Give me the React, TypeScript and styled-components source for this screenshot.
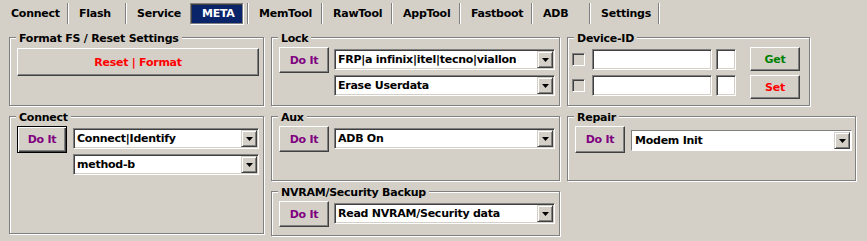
import React from "react";
import styled, { createGlobalStyle, css } from "styled-components";

const GlobalStyle = createGlobalStyle`
  html, body { margin: 0; padding: 0; background: #d4d0c8; }
  body {
    font-family: "DejaVu Sans", Verdana, sans-serif;
    font-weight: bold;
    font-size: 11px;
    letter-spacing: -0.25px;
    color: #000;
    overflow: hidden;
  }
`;

const Window = styled.div`
  width: 867px;
  height: 241px;
  background: #d4d0c8;
  overflow: hidden;
`;

const TabBar = styled.div`
  display: flex;
  height: 21px;
  padding: 3px 0 0 1px;
`;

const Tab = styled.div<{ $w: number; $noSep?: boolean }>`
  box-sizing: border-box;
  flex: none;
  width: ${(p) => p.$w}px;
  height: 21px;
  margin-right: 1px;
  padding-left: 10px;
  line-height: 21px;
  white-space: nowrap;
  border-right: 1px solid ${(p) => (p.$noSep ? "transparent" : "#808080")};
  box-shadow: ${(p) => (p.$noSep ? "none" : "1px 0 0 #fff")};
`;

const ActiveTab = styled(Tab)`
  padding-left: 0;
`;

const ActiveBox = styled.div`
  box-sizing: border-box;
  width: 53px;
  height: 21px;
  padding-left: 11px;
  line-height: 19px;
  color: #fff;
  background: #0a246a;
  border: 1px solid #808080;
  box-shadow: inset 1px 1px 0 #404040, 1px 1px 0 #fff;
`;

const Content = styled.div`
  display: flex;
  align-items: flex-start;
  gap: 6px;
  padding: 13px 0 0 9px;
`;

const Column = styled.div`
  display: flex;
  flex-direction: column;
  gap: 9px;
`;

const Group = styled.div<{ $w: number; $h: number; $pl?: number }>`
  position: relative;
  box-sizing: border-box;
  width: ${(p) => p.$w}px;
  height: ${(p) => p.$h}px;
  margin: 0 1px 1px 0;
  padding: 9px 0 0 ${(p) => p.$pl ?? 7}px;
  border: 1px solid #808080;
  box-shadow: inset 1px 1px 0 #fff, 1px 1px 0 #fff;
`;

const Legend = styled.span`
  position: absolute;
  top: -5px;
  left: 6px;
  padding: 0 3px;
  line-height: 12px;
  background: #d4d0c8;
  white-space: nowrap;
`;

const Row = styled.div<{ $gap: number }>`
  display: flex;
  align-items: flex-start;
  gap: ${(p) => p.$gap}px;
`;

const Stack = styled.div<{ $top: number; $gap: number }>`
  display: flex;
  flex-direction: column;
  gap: ${(p) => p.$gap}px;
  margin-top: ${(p) => p.$top}px;
`;

const Button = styled.button<{ $w: number; $h: number; $color: string; $default?: boolean }>`
  box-sizing: border-box;
  flex: none;
  width: ${(p) => p.$w}px;
  height: ${(p) => p.$h}px;
  margin: 0;
  padding: 0;
  font: inherit;
  letter-spacing: inherit;
  color: ${(p) => p.$color};
  background: #d4d0c8;
  cursor: default;
  ${(p) =>
    p.$default
      ? css`
          border: 1px solid #000;
          box-shadow: inset 1px 1px 0 #fff, inset -1px -1px 0 #404040, inset -2px -2px 0 #808080;
        `
      : css`
          border: 1px solid;
          border-color: #fff #404040 #404040 #fff;
          box-shadow: inset -1px -1px 0 #808080;
        `}
`;

const sunken = css`
  border: 1px solid;
  border-color: #808080 #fff #fff #808080;
  box-shadow: inset 1px 1px 0 #404040, inset -1px -1px 0 #d4d0c8;
`;

const Combo = styled.div<{ $w: number; $flat?: boolean }>`
  box-sizing: border-box;
  flex: none;
  width: ${(p) => p.$w}px;
  height: 21px;
  padding: 1px;
  display: flex;
  align-items: center;
  justify-content: space-between;
  background: #fff;
  ${(p) =>
    p.$flat
      ? css`
          border: 1px solid;
          border-color: #808080 #fff #fff #808080;
          box-shadow: inset -1px -1px 0 #fff;
        `
      : sunken}
`;

const ComboText = styled.span`
  padding-left: 2px;
  white-space: nowrap;
  overflow: hidden;
  line-height: 17px;
`;

const DropButton = styled.span`
  box-sizing: border-box;
  flex: none;
  width: 16px;
  height: 17px;
  display: flex;
  align-items: center;
  justify-content: center;
  background: #d4d0c8;
  border: 1px solid;
  border-color: #d4d0c8 #404040 #404040 #d4d0c8;
  box-shadow: inset 1px 1px 0 #fff, inset -1px -1px 0 #808080;
`;

const Edit = styled.div<{ $w: number }>`
  box-sizing: border-box;
  flex: none;
  width: ${(p) => p.$w}px;
  height: 21px;
  background: #fff;
  ${sunken}
`;

const Check = styled.div`
  box-sizing: border-box;
  flex: none;
  width: 13px;
  height: 13px;
  background: #d4d0c8;
  ${sunken}
`;

const FieldRow = styled.div`
  display: flex;
  align-items: center;
  height: 21px;
`;

const Spacer = styled.div<{ $w: number }>`
  flex: none;
  width: ${(p) => p.$w}px;
`;

const Arrow = () => (
  <svg width="7" height="4" viewBox="0 0 7 4">
    <polygon points="0,0 7,0 3.5,4" fill="#000" />
  </svg>
);

const Select = ({ w, text, flat }: { w: number; text: string; flat?: boolean }) => (
  <Combo $w={w} $flat={flat}>
    <ComboText>{text}</ComboText>
    <DropButton>
      <Arrow />
    </DropButton>
  </Combo>
);

const PURPLE = "#800080";

const tabs: { label: string; w: number; noSep?: boolean; active?: boolean }[] = [
  { label: "Connect", w: 67 },
  { label: "Flash", w: 57 },
  { label: "Service", w: 62, noSep: true },
  { label: "META", w: 58, active: true },
  { label: "MemTool", w: 73 },
  { label: "RawTool", w: 69 },
  { label: "AppTool", w: 67 },
  { label: "Fastboot", w: 71 },
  { label: "ADB", w: 57 },
  { label: "Settings", w: 68 },
];

export default function App() {
  return (
    <Window>
      <GlobalStyle />
      <TabBar>
        {tabs.map((t) =>
          t.active ? (
            <ActiveTab key={t.label} $w={t.w}>
              <ActiveBox>{t.label}</ActiveBox>
            </ActiveTab>
          ) : (
            <Tab key={t.label} $w={t.w} $noSep={t.noSep}>
              {t.label}
            </Tab>
          )
        )}
      </TabBar>
      <Content>
        <Column>
          <Group $w={255} $h={69}>
            <Legend>Format FS / Reset Settings</Legend>
            <Stack $top={1} $gap={0}>
              <Button $w={242} $h={28} $color="#ff0000">
                Reset | Format
              </Button>
            </Stack>
          </Group>
          <Group $w={255} $h={118}>
            <Legend>Connect</Legend>
            <Row $gap={6}>
              <Button $w={50} $h={27} $color={PURPLE} $default>
                Do It
              </Button>
              <Stack $top={2} $gap={5}>
                <Select w={186} text="Connect|Identify" />
                <Select w={186} text="method-b" />
              </Stack>
            </Row>
          </Group>
        </Column>
        <Column>
          <Group $w={289} $h={69}>
            <Legend>Lock</Legend>
            <Row $gap={5}>
              <Button $w={50} $h={26} $color={PURPLE}>
                Do It
              </Button>
              <Stack $top={2} $gap={5}>
                <Select w={221} text="FRP|a infinix|itel|tecno|viallon" />
                <Select w={221} text="Erase Userdata" />
              </Stack>
            </Row>
          </Group>
          <Group $w={289} $h={65}>
            <Legend>Aux</Legend>
            <Row $gap={5}>
              <Button $w={50} $h={26} $color={PURPLE}>
                Do It
              </Button>
              <Stack $top={2} $gap={5}>
                <Select w={221} text="ADB On" />
              </Stack>
            </Row>
          </Group>
          <Group $w={289} $h={45}>
            <Legend>NVRAM/Security Backup</Legend>
            <Row $gap={5}>
              <Button $w={50} $h={26} $color={PURPLE}>
                Do It
              </Button>
              <Stack $top={2} $gap={5}>
                <Select w={221} text="Read NVRAM/Security data" />
              </Stack>
            </Row>
          </Group>
        </Column>
        <Column>
          <Group $w={243} $h={69} $pl={4}>
            <Legend>Device-ID</Legend>
            <Row $gap={14}>
              <Stack $top={2} $gap={5}>
                <FieldRow>
                  <Check />
                  <Spacer $w={7} />
                  <Edit $w={120} />
                  <Spacer $w={4} />
                  <Edit $w={20} />
                </FieldRow>
                <FieldRow>
                  <Check />
                  <Spacer $w={7} />
                  <Edit $w={120} />
                  <Spacer $w={4} />
                  <Edit $w={20} />
                </FieldRow>
              </Stack>
              <Stack $top={0} $gap={4}>
                <Button $w={50} $h={24} $color="#008000">
                  Get
                </Button>
                <Button $w={50} $h={24} $color="#ff0000">
                  Set
                </Button>
              </Stack>
            </Row>
          </Group>
          <Group $w={289} $h={65}>
            <Legend>Repair</Legend>
            <Row $gap={6}>
              <Button $w={50} $h={27} $color={PURPLE}>
                Do It
              </Button>
              <Stack $top={4} $gap={5}>
                <Select w={221} text="Modem Init" flat />
              </Stack>
            </Row>
          </Group>
        </Column>
      </Content>
    </Window>
  );
}
